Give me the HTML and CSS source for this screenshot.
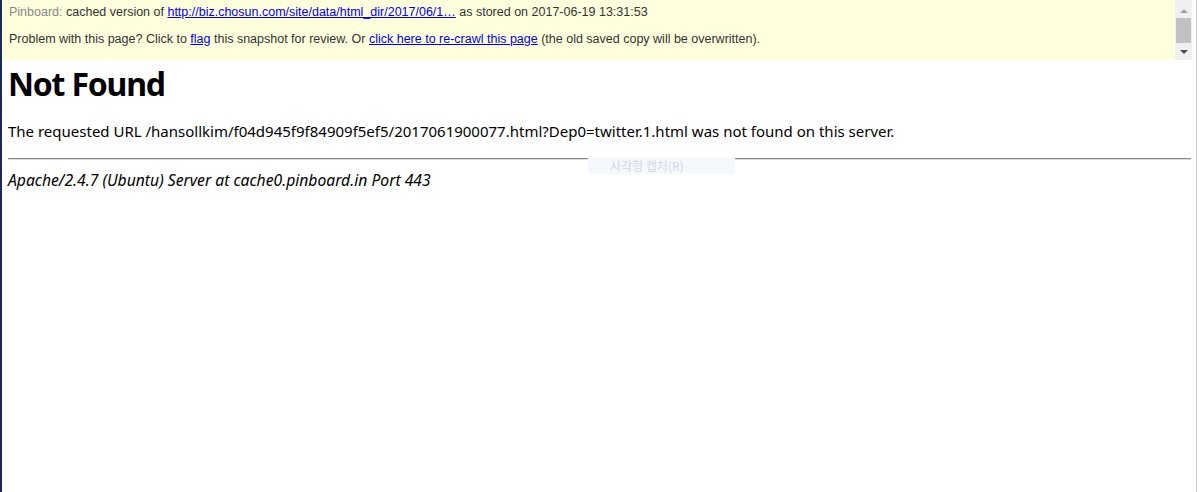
FILE: index.html
```html
<!DOCTYPE html>
<html>
<head>
<meta charset="utf-8">
<link rel="stylesheet" href="styles.css">
</head>
<body>
<div class="frame">
  <div class="banner">
    <div class="banner-text">
      <p class="line1"><span class="brand">Pinboard:</span> cached version of <a href="#">http://biz.chosun.com/site/data/html_dir/2017/06/1…</a> as stored on 2017-06-19 13:31:53</p>
      <p class="line2">Problem with this page? Click to <a href="#">flag</a> this snapshot for review. Or <a href="#">click here to re-crawl this page</a> (the old saved copy will be overwritten).</p>
    </div>
    <div class="scrollbar">
      <div class="arrow up"></div>
      <div class="thumb"></div>
      <div class="arrow down"></div>
    </div>
  </div>
  <div class="content">
    <h1>Not Found</h1>
    <p class="msg">The requested URL /hansollkim/f04d945f9f84909f5ef5/2017061900077.html?Dep0=twitter.1.html was not found on this server.</p>
    <hr>
    <address>Apache/2.4.7 (Ubuntu) Server at cache0.pinboard.in Port 443</address>
  </div>
  <div class="capture-tip">사각형 캡처(R)</div>
</div>
</body>
</html>
```
FILE: styles.css
```css
html, body {
  margin: 0;
  padding: 0;
  background: #fff;
}
.frame {
  position: relative;
  height: 492px;
  border-left: 2px solid #1c2a5a;
  border-right: 3px solid #fff;
  box-shadow: inset -1px 0 0 #c8c8c8;
  box-sizing: border-box;
  width: 1200px;
}
.banner {
  display: flex;
  height: 60px;
  margin-right: 5px;
}
.banner-text {
  flex: 1;
  background: #ffffdd;
  font-family: "Liberation Sans", Arial, sans-serif;
  font-size: 12.5px;
  color: #333;
  padding: 5px 7px 0;
}
.banner-text p {
  margin: 0;
  line-height: 15px;
}
.banner-text .line2 {
  margin-top: 12px;
}
.banner-text a {
  color: #0000ee;
  text-decoration: underline;
}
.brand {
  color: #888;
}
.scrollbar {
  width: 17px;
  background: #f0f0f0;
  display: flex;
  flex-direction: column;
  align-items: center;
}
.arrow {
  width: 0;
  height: 0;
  border-left: 4px solid transparent;
  border-right: 4px solid transparent;
}
.arrow.up {
  margin-top: 9px;
  border-bottom: 4px solid #a3a3a3;
}
.arrow.down {
  margin-top: auto;
  margin-bottom: 6px;
  border-top: 4px solid #505050;
}
.thumb {
  margin-top: 5px;
  width: 15px;
  height: 25px;
  background: #c1c1c1;
}
.content {
  padding: 0 6px;
  font-family: "Noto Sans", "Open Sans", sans-serif;
  color: #000;
}
h1 {
  margin: 4px 0 0;
  font-size: 32px;
  line-height: 40px;
  font-weight: bold;
  letter-spacing: -1.2px;
}
.msg {
  margin: 15px 0 0;
  font-size: 15px;
  line-height: 24px;
}
hr {
  margin: 15px 0 0;
  border: 0;
  border-top: 1px solid #888;
  border-bottom: 1px solid #ddd;
  height: 0;
}
address {
  margin-top: 8px;
  font-style: italic;
  font-size: 15.7px;
  line-height: 24px;
}
.capture-tip {
  position: absolute;
  left: 586px;
  top: 158px;
  width: 147px;
  height: 16px;
  background: #f5f9fd;
  color: #d0d8e2;
  font-family: "Noto Sans CJK KR", sans-serif;
  font-size: 12px;
  line-height: 16px;
  padding-left: 22px;
  box-sizing: border-box;
}
```
